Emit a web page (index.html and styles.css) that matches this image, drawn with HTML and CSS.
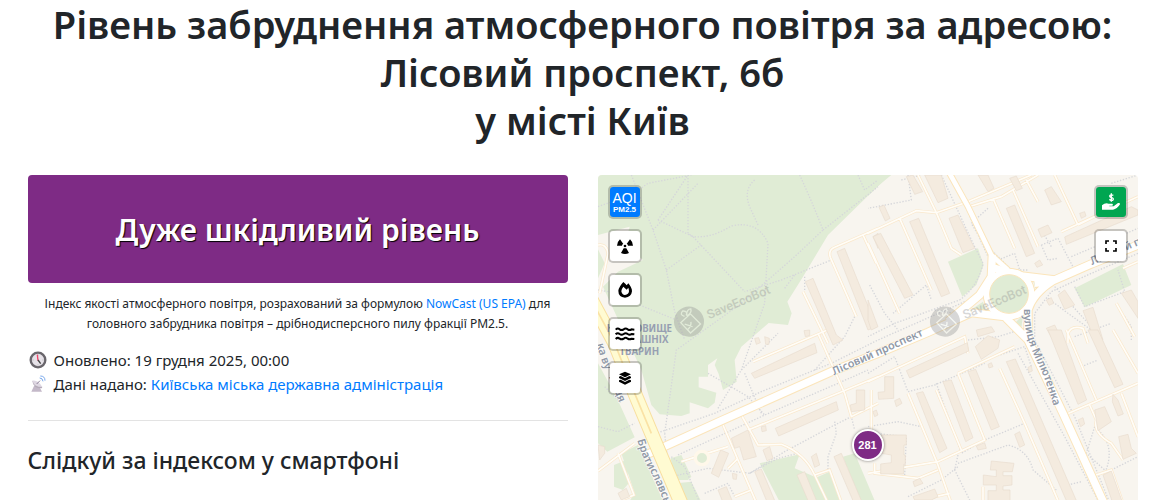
FILE: index.html
```html
<!DOCTYPE html>
<html lang="uk">
<head>
<meta charset="utf-8">
<meta name="viewport" content="width=device-width, initial-scale=1">
<title>Рівень забруднення повітря – Лісовий проспект, 6б, Київ</title>
<link rel="stylesheet" href="styles.css">
</head>
<body>
<main class="page">
  <h1 class="page-title">Рівень забруднення атмосферного повітря за адресою:<br>Лісовий проспект, 6б<br>у місті Київ</h1>
  <div class="columns">
    <section class="info">
      <div class="level">Дуже шкідливий рівень</div>
      <p class="note">Індекс якості атмосферного повітря, розрахований за формулою <a href="#nowcast">NowCast (US EPA)</a> для<br>головного забрудника повітря – дрібнодисперсного пилу фракції PM2.5.</p>
      <ul class="meta">
        <li>
          <svg class="meta-icon" viewBox="0 0 54 54" aria-hidden="true"><circle cx="27" cy="27" r="22" fill="#e6e2e8" stroke="#69666c" stroke-width="7"/><path d="M27 10v4M27 40v4M10 27h4M40 27h4" stroke="#aaa" stroke-width="2"/><path d="M25 11l2 18" stroke="#f0476a" stroke-width="4"/><path d="M27 27l8 11" stroke="#444" stroke-width="4"/></svg>
          <span>Оновлено: 19 грудня 2025, 00:00</span>
        </li>
        <li>
          <svg class="meta-icon" viewBox="0 0 54 54" aria-hidden="true"><path d="M7 50l8-17h15l9 17z" fill="#c4b9c9"/><path d="M10 17q2 23 28 23l2-4z" fill="#b5abb9"/><path d="M10 17q17-3 30 19Q15 36 10 17z" fill="#ded7e2"/><path d="M23 27l10-10" stroke="#8e8199" stroke-width="3"/><path d="M32 9q9 0 10 10M34 3q14 0 14 14" fill="none" stroke="#79a9ed" stroke-width="3"/></svg>
          <span>Дані надано: <a href="#source">Київська міська державна адміністрація</a></span>
        </li>
      </ul>
      <hr class="rule">
      <h2 class="subtitle">Слідкуй за індексом у смартфоні</h2>
    </section>
    <section class="map" aria-label="Карта якості повітря">
      <svg class="map-canvas" viewBox="0 15 1620 1000" role="img" aria-label="Лісовий проспект, Київ">
        <defs>
          <path id="street-milyutenka" d="M1278 417C1276 465 1290 520 1318 577Q1345 630 1378 745"/>
          <path id="street-bratislavska" d="M118 810Q132 865 159 908Q198 985 235 1110"/>
          <path id="street-west" d="M-4 522Q5 560 22 600L68 712"/>
          <path id="street-west-end" d="M33 622L90 765"/>
          <g id="bot">
            <circle r="45" fill="#929292"/>
            <path d="M-24-7L13-20L29 20L-9 33zM-6-20Q-20-31-4-37Q10-29 0-20M0-21Q10-38 20-33Q19-21 0-18M-15 2L4 18M-12 20Q2 15 5 3" fill="none" stroke="#e4eadf" stroke-width="4"/>
            <text x="58" y="17" class="brand">SaveEcoBot</text>
          </g>
        </defs>
        <rect y="15" width="1620" height="1000" class="land"/>
        <g class="park">
          <path d="M0 15H880L840 48L690 195L615 320L568 395L581 430L570 465L512 459L430 530L410 570L416 635L375 660L362 612L350 585L358 565L330 585V620H302V652L355 668L350 698L330 715L275 697V730L250 738L185 733L160 705L130 600L15 350L60 305L135 270L80 225L95 170L0 195z"/>
          <path d="M0 238L20 280L0 325zM0 580L55 680L110 802L28 845L0 820zM70 850L120 825L205 1015H80L110 970zM48 885L85 870L92 940L75 960L48 950zM218 865L250 855L280 920L270 930H230zM235 940L280 935L320 1015H265zM485 880L605 853L590 895L650 920L700 1015H555zM650 925L695 905L740 1015H690zM735 860L770 850L840 1015H795zM810 15H875L810 78zM1050 275L1140 235L1157 285L1135 345L1093 380zM1430 355L1575 282L1600 345L1460 412z"/>
          <path d="M1185 260L1235 298L1190 305zM1305 332L1340 333L1315 360zM1110 425L1155 395L1165 428zM1250 460L1275 435L1270 475z"/>
        </g>
        <g class="paths">
          <path d="M100 15L165 180L205 300L230 425L260 510M180 150L270 15M165 180L300 40M180 150L285 200L440 365M205 300L310 225M270 15L270 190L285 200Q340 205 400 168Q480 150 510 220L500 400L430 600M0 110L100 75L150 40L280 15M470 30Q435 60 455 110L480 165M605 15Q640 90 675 180L590 260L430 400L235 540L200 790M675 180L840 50M695 272L550 330L440 365M560 355L590 315M620 320V365M125 405L235 450M780 15L800 60L840 30M0 360L60 370L100 390"/>
          <path d="M0 770L60 785L110 760M20 650L70 700M0 460L100 670L175 790L350 730L490 665L700 580L840 510L1100 395M240 855L360 800L500 735L720 640L810 600M330 610L450 680L500 735M360 715L430 600L540 490M440 610L490 730M220 860L260 890L310 1010M220 920L330 895L455 910L560 845L700 770L760 740L770 780M710 755L715 790L690 860L690 900M455 910L540 865L600 850M320 970L390 940L410 980M200 790L215 930M770 440L740 500L650 600"/>
          <path d="M930 15L940 90L810 115M815 345L860 430L900 480M885 430L985 345L1000 390M910 30L970 15M1030 15L1125 220L1155 280Q1140 350 1085 390L890 460L810 500M1060 15L1170 260M1170 115L1120 160L1150 210L1240 300L1290 300M1200 270L1250 250L1265 300M1330 225L1380 205L1430 300M1330 225L1350 270L1380 265M1330 180L1360 230M1310 500V430L1360 365L1480 310L1620 250M1370 350L1480 470M1350 385L1410 430L1480 480M1430 350L1460 410L1580 365L1560 300M1580 440L1600 470V510M1430 500L1540 460M1420 260L1620 175M1010 420L1070 430L1030 470M1540 40L1620 15"/>
          <path d="M810 610L890 560L905 600L930 665L1010 645L1160 580M810 770L900 755L970 770M1015 640L1090 850L1160 810L1280 760M1080 880L1230 825Q1290 840 1305 900L1375 960M1080 855L1070 900L1125 1010M1190 560L1280 530L1300 590M830 790L925 800L920 915M930 980L1030 930L1080 890M1260 550L1400 800L1510 1010M1310 510L1430 740L1540 1010M1450 590L1500 570M1490 770L1465 850L1520 900M1500 780Q1555 830 1520 910M1540 900L1620 860M1410 945L1450 935M1110 510L1200 500L1280 475"/>
        </g>
        <g class="lane-edge">
          <path id="lanes" d="M840 175L710 232Q690 240 697 262L775 440M795 195L835 280M660 490L740 670L760 740L840 700M465 575L665 490L700 475M615 365L690 520M430 735L480 825L550 823Q620 850 650 915L695 1010M375 765L450 940L480 1010M450 780L720 670L840 620M390 830L250 875M390 895L420 865M410 980L460 960M0 903L110 820M60 850L108 975L70 990M0 225Q25 220 30 250L5 370M650 915L695 900L735 1010M820 660V800M810 190L955 122L1015 128L1110 95L1300 15M960 15L1015 128L1060 235L1090 255M905 145L1000 360M810 220L905 430M1120 108L1210 80L1320 15M1185 85L1250 235M1245 60L1320 230M1285 30L1320 95M1370 15L1440 165M1390 185L1620 80M1440 165L1500 135M1575 295L1620 275M810 635L1100 500L1110 550M1080 610L1250 530M1080 610L1160 810L1020 875L810 910M1015 660L1090 840M930 670L1018 880L1065 1015M1205 595L1280 760L1390 1015M1400 735L1620 640M1405 480L1495 690M1545 480L1620 610M1570 670L1620 800M1475 705L1495 750Q1485 790 1540 820L1575 870M1480 920L1540 900L1580 1015M1155 1015V950M830 880V910L960 925L1020 900M1410 520V490Q1420 465 1455 475L1470 520M1555 400L1610 500M970 990L1055 970"/>
        </g>
        <g class="lane">
          <use href="#lanes"/>
        </g>
        <g class="building">
          <path d="M717 245L740 235L835 470L810 480zM622 335L645 325L715 495L735 510L705 525zM825 200L840 190V235zM460 610L650 520L657 548L470 625zM532 775L715 695L721 720L542 798zM400 805L450 780L475 860L437 870L425 830L410 835zM340 910L368 840L392 850L362 922zM495 840L515 830L525 865L507 872zM640 860L655 850L665 885L650 892zM360 960L385 950L412 1015H382zM470 905L490 897L540 1015H515zM597 915L620 905L665 1015H640zM708 860L730 850L800 1015H775zM775 660H800V720L760 725L757 705L775 700zM60 970L85 955L95 980L70 990zM0 825L20 830V850L5 870zM470 505L482 503L487 518L475 523zM500 500L514 505L513 523L503 523zM618 482L635 480V497L622 500zM490 770L503 767L505 782L492 785zM403 910L417 913L415 928L405 927z"/>
          <path d="M825 200L848 190L945 375L920 385zM935 155L962 145L1055 370L1030 380zM810 390L840 470L820 480L810 450zM843 112L858 105L876 145L862 153zM925 20L945 15L974 65L950 73zM980 15H1030L1050 85L1020 98zM1053 145L1080 135L1130 235L1095 248zM1140 15H1170L1188 55L1170 65zM1225 115L1250 105L1310 250L1285 260zM1235 25L1255 18L1273 55L1255 62zM1400 201L1600 110L1620 120V135L1405 223zM1340 60L1360 50L1390 95L1360 105zM1320 178L1350 165L1362 188L1330 202zM1310 280L1325 270L1334 285L1317 292zM1380 375L1400 360L1430 405L1400 418zM1455 422L1485 412L1515 510H1490zM1570 370L1600 360L1620 395V445zM1345 390L1360 383L1367 400L1353 406zM1445 130L1460 125L1464 138L1450 145zM1135 480L1180 470L1190 485L1140 500zM1345 475L1370 465L1392 510H1365z"/>
          <path d="M925 602L1108 518L1112 543L935 624zM860 620H887V685L842 688L840 667L860 665zM1132 530L1170 497L1205 510L1200 535L1150 568zM955 670L975 665L1047 835L1025 848zM1035 635L1060 630L1125 803L1103 815zM1110 605L1133 598L1204 770L1180 780zM1225 575L1252 567L1445 1015H1415zM1350 480H1390L1466 690L1440 703zM1470 480H1500L1575 643L1550 653zM1490 720L1520 710L1540 755L1500 782zM1545 673L1560 690L1576 732L1560 738L1543 695zM1562 800L1590 793L1600 835L1615 850L1575 868zM1515 915L1540 903L1580 1015H1550zM1250 793L1265 785L1280 825L1265 832zM850 795H925V825H918V855H922V883H917V912H848V882L880 878V855L850 850zM1180 873L1248 880L1243 905H1215V917H1242V945L1215 948V960H1236V1000H1170V962H1195V945H1156V915L1195 920V900H1177zM945 980L1010 957L1020 980L1000 990H950zM945 935L965 925L975 940L950 950zM890 692L905 685L912 700L895 710zM825 725L835 720L840 735L830 740zM1440 750L1455 743L1460 762L1448 770zM1170 583L1180 578L1185 590L1173 594zM1290 592L1300 588L1303 603L1293 607zM1135 828L1160 818L1165 835L1140 840z"/>
        </g>
        <g class="road-edge">
          <path id="streets" d="M150 852L370 752L700 605L840 550L990 487L1120 428M1310 340L1365 332L1480 282L1620 225M1190 295L1270 318L1370 330M1120 428L1220 440L1290 510L1395 730L1525 1015M1183 255L1180 320L1145 375L1050 455M1365 332Q1305 370 1290 420V510"/>
          <circle cx="1233" cy="372" r="65"/>
        </g>
        <path class="side-edge" d="M1052 5L1110 110L1180 255L1230 300"/>
        <g class="road">
          <use href="#streets"/>
          <circle cx="1233" cy="372" r="65"/>
        </g>
        <path class="side" d="M1052 5L1110 110L1180 255L1230 300"/>
        <circle cx="1233" cy="372" r="58" class="island"/>
        <circle cx="312" cy="864" r="20" class="ring"/>
        <path class="avenue-edge" d="M-25 380L50 520L110 670L175 825L260 1025"/>
        <path class="avenue" d="M-25 380L50 520L110 670L175 825L260 1025"/>
        <path class="avenue-line" d="M-25 380L50 520L110 670L160 790"/>
        <g class="street-name">
          <text transform="translate(708 616) rotate(-24)">Лісовий проспект</text>
          <text transform="translate(1482 285) rotate(-23)">Лісовий проспект</text>
          <text><textPath href="#street-milyutenka">вулиця Мілютенка</textPath></text>
          <text><textPath href="#street-bratislavska">Братиславська</textPath></text>
          <text><textPath href="#street-west">ка ву</textPath></text>
          <text><textPath href="#street-west-end">лиця</textPath></text>
        </g>
        <g class="place-name">
          <text x="124" y="486">КЛАДОВИЩЕ</text>
          <text x="124" y="520">ДОМАШНІХ</text>
          <text x="124" y="554">ТВАРИН</text>
        </g>
        <use href="#bot" class="watermark" transform="translate(273 455) rotate(-23)"/>
        <use href="#bot" class="watermark" transform="translate(1041 455) rotate(-23)"/>
      </svg>
      <div class="controls controls-left">
        <button class="control control-aqi" type="button"><span class="aqi">AQI</span><span class="pm">PM2.5</span></button>
        <button class="control" type="button" aria-label="Радіація"><svg viewBox="0 0 54 54"><path d="M18 26H3Q4 14 12 7L22 21Q18 22 18 26zM36 26H51Q50 14 42 7L32 21Q36 22 36 26zM23 34H31L39 48Q27 54 15 48z"/><circle cx="27" cy="27" r="4"/></svg></button>
        <button class="control" type="button" aria-label="Пожежі"><svg viewBox="0 0 54 54"><path fill-rule="evenodd" d="M22 3Q29 8 32 13L37 7Q48 20 48 31Q46 49 27 50Q7 48 7 29Q9 17 22 3zM22 17Q15 26 16 31Q18 42 27 42Q38 41 39 31Q39 26 37 20L32 26Q27 22 22 17z"/></svg></button>
        <button class="control" type="button" aria-label="Вода"><svg class="wide" viewBox="0 0 60 54"><path d="M2 14Q8 8 14 13Q20 17 26 13Q32 8 38 13Q44 17 50 13L58 14M2 28Q8 22 14 27Q20 31 26 27Q32 22 38 27Q44 31 50 27L58 28M2 42Q8 36 14 41Q20 45 26 41Q32 36 38 41Q44 45 50 41L58 42" fill="none" stroke="#000" stroke-width="6"/></svg></button>
        <button class="control" type="button" aria-label="Шари"><svg viewBox="0 0 54 54"><path d="M27 8L45 16L27 25L9 16zM9 23L14 21L27 28L40 21L45 23V27L27 36L9 27zM9 34L14 32L27 39L40 32L45 34V38L27 47L9 38z"/></svg></button>
      </div>
      <div class="controls controls-right">
        <button class="control control-donate" type="button" aria-label="Підтримати"><svg class="wide" viewBox="0 0 60 60"><path d="M3 40Q13 31 23 35H34Q38 38 34 41H25V43H38L51 33Q58 32 57 37Q48 52 36 53H3z" fill="#fff"/><path d="M37 10Q28 6 26 12Q27 16 32 17Q39 19 36 24Q32 27 25 22M31 4v25" fill="none" stroke="#fff" stroke-width="4"/></svg></button>
        <button class="control" type="button" aria-label="На весь екран"><svg viewBox="0 0 54 54"><path d="M12 21V12H21M33 12H42V21M42 33V42H33M21 42H12V33" fill="none" stroke="#000" stroke-width="5"/></svg></button>
      </div>
      <button class="marker" type="button">281</button>
    </section>
  </div>
</main>
</body>
</html>
```
FILE: styles.css
```css
* { box-sizing: border-box; }
body {
  margin: 0;
  background: #fff;
  color: #212529;
  font-family: "Segoe UI", "Noto Sans", sans-serif;
  font-size: 15px;
  line-height: 24px;
}
a { color: #007bff; text-decoration: none; }
.page { max-width: 1140px; margin: 0 auto; padding: 0 13px 0 17px; }
.page-title {
  margin: 0 0 31px;
  font-size: 38px;
  font-weight: 600;
  line-height: 48px;
  text-align: center;
}
.columns { display: grid; grid-template-columns: 1fr 1fr; gap: 30px; }
.level {
  padding: 33px 16px 31px;
  border-radius: 4px;
  background: #7e2b85;
  color: #fff;
  font-size: 30px;
  font-weight: 600;
  line-height: 44px;
  text-align: center;
  text-shadow: 1px 1px 1px #000;
}
.note { margin: 11px 0 14px; font-size: 12px; line-height: 20px; text-align: center; }
.meta { margin: 0; padding: 0; list-style: none; }
.meta li { display: flex; align-items: center; gap: 7px; }
.meta-icon { width: 18px; height: 18px; margin-left: 1px; }
.rule { margin: 24px 0 22px; border: 0; border-top: 1px solid #e3e3e3; }
.subtitle { margin: 0; font-size: 23px; font-weight: 500; line-height: 34px; }
.map { position: relative; overflow: hidden; border-radius: 4px 4px 0 0; }
.map-canvas { display: block; width: 100%; height: auto; }
.land { fill: #f8f5ef; }
.park { fill: #e0ecd5; }
.paths { fill: none; stroke: #d5d6da; stroke-width: 4; stroke-dasharray: 4 5; }
.lane-edge { fill: none; stroke: #fae8cc; stroke-width: 9; }
.lane { fill: none; stroke: #fffdf8; stroke-width: 5; }
.building { fill: #f4ebdf; stroke: #e9ddcf; stroke-width: 2; }
.road-edge { fill: none; stroke: #fbe5bb; stroke-width: 28; }
.road { fill: none; stroke: #fff; stroke-width: 22; }
.side-edge { fill: none; stroke: #fbe5bb; stroke-width: 20; }
.side { fill: none; stroke: #fff; stroke-width: 14; }
.island { fill: #e0ecd5; stroke: #fbe5bb; stroke-width: 3; }
.ring { fill: #e0ecd5; stroke: #fff8ea; stroke-width: 10; }
.avenue-edge { fill: none; stroke: #f8df9f; stroke-width: 44; }
.avenue { fill: none; stroke: #fffbd2; stroke-width: 38; }
.avenue-line { fill: none; stroke: #fae2a5; stroke-width: 5; }
.street-name { fill: #9199a6; stroke: #fff; stroke-width: 3; paint-order: stroke; font-size: 33px; font-weight: 600; }
.place-name { fill: #979fb2; font-size: 29px; font-weight: 700; text-anchor: middle; }
.brand { fill: #929292; font-family: "Roboto", sans-serif; font-size: 38px; font-weight: 500; }
.watermark { opacity: .36; }
.controls { position: absolute; top: 10px; display: grid; gap: 10px; }
.controls-left { left: 10px; }
.controls-right { right: 10px; }
.control {
  display: flex;
  flex-direction: column;
  align-items: center;
  justify-content: center;
  width: 34px;
  height: 34px;
  padding: 0;
  border: 2px solid rgba(0, 0, 0, .2);
  border-radius: 5px;
  background: #fff;
  background-clip: padding-box;
  color: #fff;
  font-family: "Liberation Sans", sans-serif;
}
.control svg { width: 18px; height: 18px; }
.control .wide { width: 20px; height: 20px; }
.control-aqi { background-color: #007bff; }
.control-donate { background-color: #00a651; }
.aqi { font-size: 14px; line-height: 14px; }
.pm { font-size: 8px; font-weight: 700; line-height: 9px; }
.marker {
  position: absolute;
  top: 254px;
  left: 50%;
  width: 32px;
  height: 32px;
  margin-left: -16px;
  padding: 0;
  border: 2px solid #fff;
  border-radius: 50%;
  background: #7e2b85;
  box-shadow: 0 0 3px rgba(0, 0, 0, .5);
  color: #fff;
  font: 700 11px/28px "Liberation Sans", sans-serif;
}
```
